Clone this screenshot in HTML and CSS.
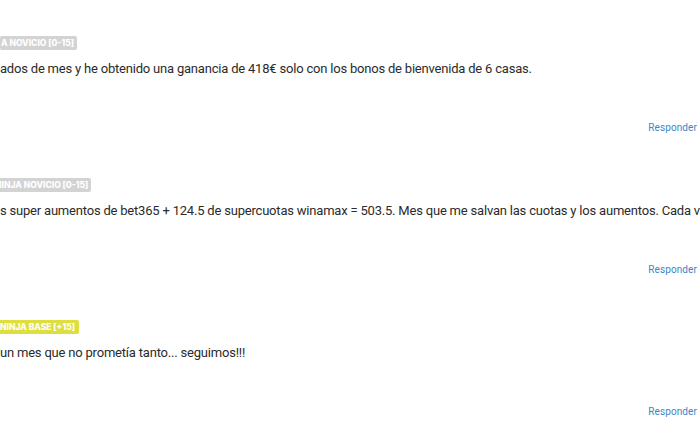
FILE: index.html
```html
<!DOCTYPE html>
<html lang="es">
<head>
<meta charset="utf-8">
<link rel="stylesheet" href="styles.css">
</head>
<body>
<div class="feed">
  <div class="comment">
    <div class="head"><span class="badge badge-gray b1">A NOVICIO [0-15]</span></div>
    <p class="text">ados de mes y he obtenido una ganancia de 418€ solo con los bonos de bienvenida de 6 casas.</p>
    <div class="actions"><a class="reply">Responder</a></div>
  </div>
  <div class="comment">
    <div class="head"><span class="badge badge-gray b2">NINJA NOVICIO [0-15]</span></div>
    <p class="text">s super aumentos de bet365 + 124.5 de supercuotas winamax = 503.5. Mes que me salvan las cuotas y los aumentos. Cada v</p>
    <div class="actions"><a class="reply">Responder</a></div>
  </div>
  <div class="comment">
    <div class="head"><span class="badge badge-yellow b3">NINJA BASE [+15]</span></div>
    <p class="text">un mes que no prometía tanto... seguimos!!!</p>
    <div class="actions"><a class="reply">Responder</a></div>
  </div>
</div>
</body>
</html>
```
FILE: styles.css
```css
html, body {
  margin: 0;
  padding: 0;
  background: #ffffff;
  overflow: hidden;
}
body {
  font-family: Roboto, "Noto Sans", "Liberation Sans", sans-serif;
  color: #2b2b2b;
  width: 700px;
  height: 441px;
}
.feed {
  padding-top: 36px;
}
.comment {
  margin-bottom: 42px;
}
.head {
  height: 14px;
  display: flex;
  overflow: hidden;
}
.badge {
  display: inline-block;
  height: 14px;
  line-height: 14px;
  font-family: Inter, Roboto, sans-serif;
  font-size: 8.5px;
  font-weight: 800;
  letter-spacing: 0;
  color: #ffffff;
  padding: 0 3px 0 1px;
  border-radius: 2px;
  white-space: nowrap;
}
.badge-gray {
  background: #d3d3d3;
}
.badge-yellow {
  background: #dede3e;
}
.b2 { margin-left: -6px; }
.b3 { margin-left: -1px; padding-right: 4px; }
.text {
  margin: 9px 0 0;
  font-size: 13px;
  letter-spacing: -0.2px;
  line-height: 20px;
  white-space: nowrap;
  overflow: hidden;
}
.actions {
  margin-top: 41px;
  display: flex;
  justify-content: flex-end;
  padding-right: 3px;
}
.reply {
  font-size: 10px;
  letter-spacing: 0.1px;
  line-height: 16px;
  color: #3d85c6;
  cursor: pointer;
}
```
